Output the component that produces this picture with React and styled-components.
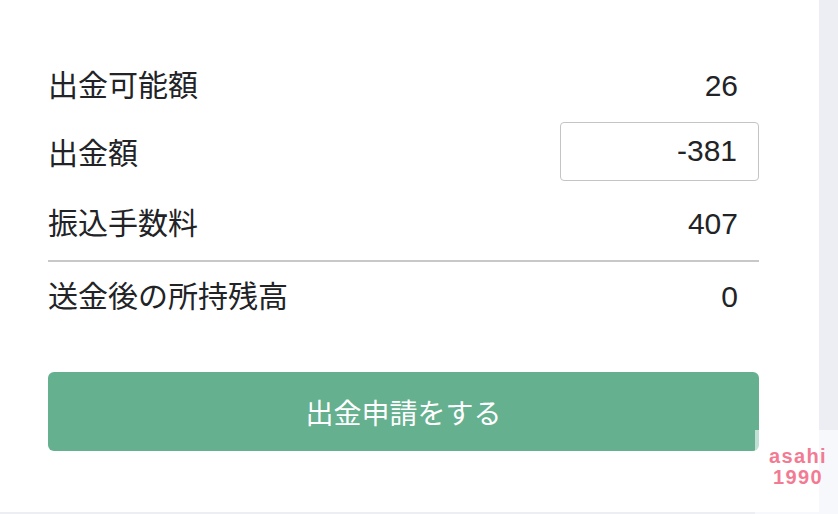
import styled, { createGlobalStyle } from "styled-components"

const GlobalStyle = createGlobalStyle`
    html, body {
        margin: 0;
        padding: 0;
        background-color: #eceef4;
    }
    body {
        font-family: "Liberation Sans", "Noto Sans CJK JP", sans-serif;
        color: #222326;
    }
`

const StyledPage = styled.div`
    position: relative;
    width: 838px;
    height: 514px;
    overflow: hidden;
`
const StyledPanel = styled.main`
    width: 819px;
    height: 512px;
    background-color: #ffffff;
    box-sizing: border-box;
    padding: 52px 0 0 48px;
`
const StyledForm = styled.section`
    width: 711px;
    display: flex;
    flex-direction: column;
`
const StyledRow = styled.div`
    display: flex;
    justify-content: space-between;
    align-items: center;
    height: ${(props) => props.$height}px;
`
const StyledLabel = styled.span`
    font-size: 30px;
    line-height: 1;
    padding-top: ${(props) => props.$shift || 0}px;
`
const StyledValue = styled.span`
    font-size: 30px;
    line-height: 1;
    padding-right: 21px;
    padding-top: ${(props) => props.$shift || 0}px;
`
const StyledInput = styled.input`
    width: 199px;
    height: 59px;
    box-sizing: border-box;
    border: 1.5px solid #c4c4c4;
    border-radius: 4px;
    padding: 0 21px 0 10px;
    text-align: right;
    font-family: "Liberation Sans", sans-serif;
    font-size: 30px;
    color: #222326;
    background: #ffffff;
    outline: none;
`
const StyledDivider = styled.hr`
    margin: 0;
    border: none;
    height: 2px;
    background-color: #c8c8c8;
`
const StyledButton = styled.button`
    margin-top: 40px;
    height: 79px;
    width: 100%;
    border: none;
    border-radius: 6px;
    background-color: #64b08f;
    color: #ffffff;
    font-family: "Liberation Sans", "Noto Sans CJK JP", sans-serif;
    font-size: 28px;
`
const StyledMark = styled.div`
    position: absolute;
    right: 0;
    bottom: 0;
    width: 83px;
    height: 84px;
    background-color: rgba(255, 255, 255, 0.6);
    display: flex;
    flex-direction: column;
    align-items: center;
    padding: 16px 0 0 3px;
    box-sizing: border-box;
    color: #f27b93;
    font-weight: bold;
    font-family: "Liberation Sans", sans-serif;
    font-size: 20px;
    line-height: 21px;
    letter-spacing: 1.4px;
`

export default function App() {
    return (
        <>
            <GlobalStyle />
            <StyledPage>
                <StyledPanel>
                    <StyledForm>
                        <StyledRow $height={68}>
                            <StyledLabel>出金可能額</StyledLabel>
                            <StyledValue>26</StyledValue>
                        </StyledRow>
                        <StyledRow $height={62}>
                            <StyledLabel $shift={5}>出金額</StyledLabel>
                            <StyledInput type="text" defaultValue="-381" />
                        </StyledRow>
                        <StyledRow $height={78}>
                            <StyledLabel $shift={6}>振込手数料</StyledLabel>
                            <StyledValue $shift={6}>407</StyledValue>
                        </StyledRow>
                        <StyledDivider />
                        <StyledRow $height={70}>
                            <StyledLabel>送金後の所持残高</StyledLabel>
                            <StyledValue>0</StyledValue>
                        </StyledRow>
                        <StyledButton>出金申請をする</StyledButton>
                    </StyledForm>
                </StyledPanel>
                <StyledMark>
                    <span>asahi</span>
                    <span>1990</span>
                </StyledMark>
            </StyledPage>
        </>
    )
}
